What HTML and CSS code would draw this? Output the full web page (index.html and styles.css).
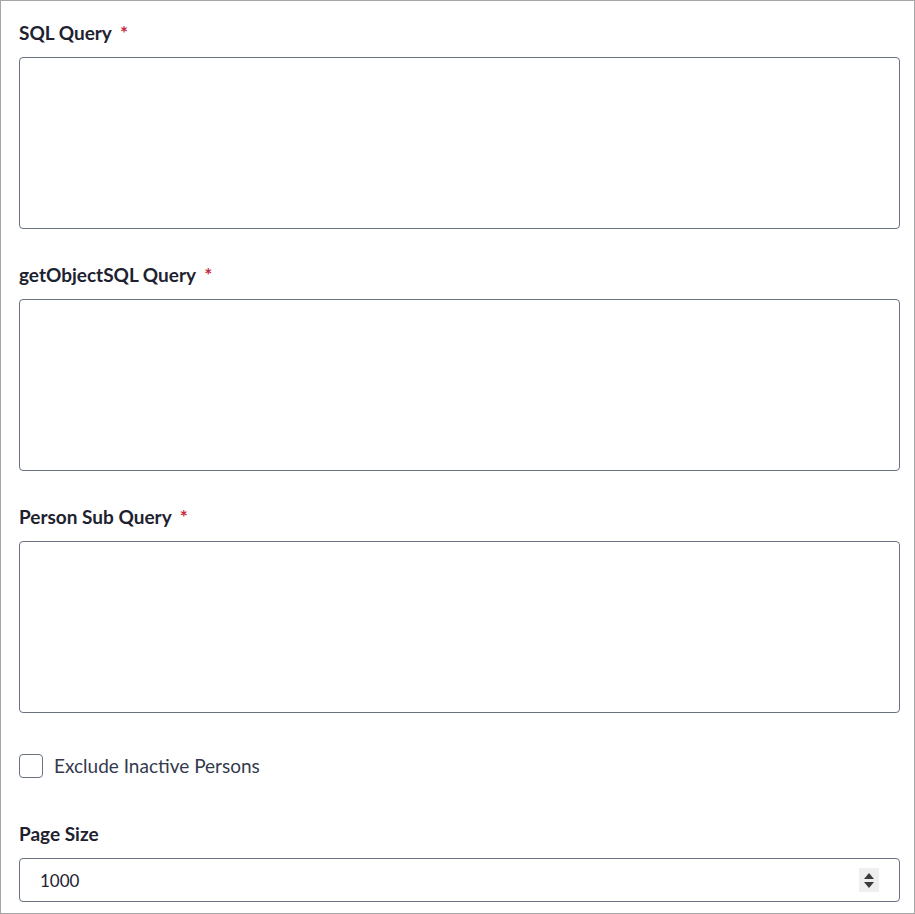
FILE: index.html
```html
<!DOCTYPE html>
<html lang="en">
<head>
  <meta charset="UTF-8">
  <title>Query Settings</title>
  <link rel="stylesheet" href="styles.css">
</head>
<body>

<form class="panel">
  <div class="field">
    <label for="sql">SQL Query <span class="req">*</span></label>
    <textarea id="sql" name="sql"></textarea>
  </div>

  <div class="field">
    <label for="objsql">getObjectSQL Query <span class="req">*</span></label>
    <textarea id="objsql" name="objsql"></textarea>
  </div>

  <div class="field">
    <label for="personsub">Person Sub Query <span class="req">*</span></label>
    <textarea id="personsub" name="personsub"></textarea>
  </div>

  <div class="check-row">
    <input type="checkbox" id="inactive" name="inactive">
    <label for="inactive">Exclude Inactive Persons</label>
  </div>

  <div class="field last">
    <label for="pagesize">Page Size</label>
    <div class="number-box">
      <input type="number" id="pagesize" name="pagesize" value="1000">
      <span class="spinner">
        <span class="arrow up"></span>
        <span class="arrow down"></span>
      </span>
    </div>
  </div>
</form>

</body>
</html>
```

FILE: styles.css
```css
html, body {
  margin: 0;
  padding: 0;
  height: 100%;
}

body {
  font-family: "Source Sans Pro", Lato, "Noto Sans", sans-serif;
  color: #1e2230;
  background-color: #fff;
  box-sizing: border-box;
  border: 1px solid #a6a6a6;
}

.panel {
  padding: 18px 14px 0 18px;
}

.field {
  margin-bottom: 32px;
}

.field label {
  display: block;
  font-weight: bold;
  font-size: 19px;
  line-height: 28px;
  margin: 0 0 10px;
}

.req {
  color: #c8283c;
  margin-left: 4px;
}

textarea {
  display: block;
  width: 100%;
  height: 172px;
  box-sizing: border-box;
  border: 1px solid #6b7280;
  border-radius: 4px;
  resize: none;
  font-family: inherit;
  font-size: 18px;
}

.check-row {
  display: flex;
  align-items: center;
  gap: 11px;
  margin: 41px 0 42px;
}

.check-row input {
  appearance: none;
  width: 24px;
  height: 24px;
  margin: 0;
  border: 1px solid #6b7280;
  border-radius: 4px;
  background: #fff;
}

.check-row label {
  font-size: 19px;
  line-height: 24px;
  color: #333a4d;
}

.number-box {
  display: flex;
  align-items: center;
  height: 44px;
  margin-top: 1px;
  box-sizing: border-box;
  border: 1px solid #6b7280;
  border-radius: 4px;
  padding: 0 20px 0 20px;
}

.number-box input {
  flex: 1;
  border: none;
  outline: none;
  padding: 0;
  font-family: inherit;
  font-size: 17px;
  color: #1e2230;
  appearance: textfield;
  -moz-appearance: textfield;
}

.number-box input::-webkit-inner-spin-button,
.number-box input::-webkit-outer-spin-button {
  -webkit-appearance: none;
  margin: 0;
}

.spinner {
  display: flex;
  flex-direction: column;
  align-items: center;
  justify-content: center;
  gap: 3px;
  width: 20px;
  height: 24px;
  background-color: #efefef;
}

.arrow {
  width: 0;
  height: 0;
  border-left: 5px solid transparent;
  border-right: 5px solid transparent;
}

.arrow.up {
  border-bottom: 6px solid #3c3c3c;
}

.arrow.down {
  border-top: 6px solid #3c3c3c;
}
```
